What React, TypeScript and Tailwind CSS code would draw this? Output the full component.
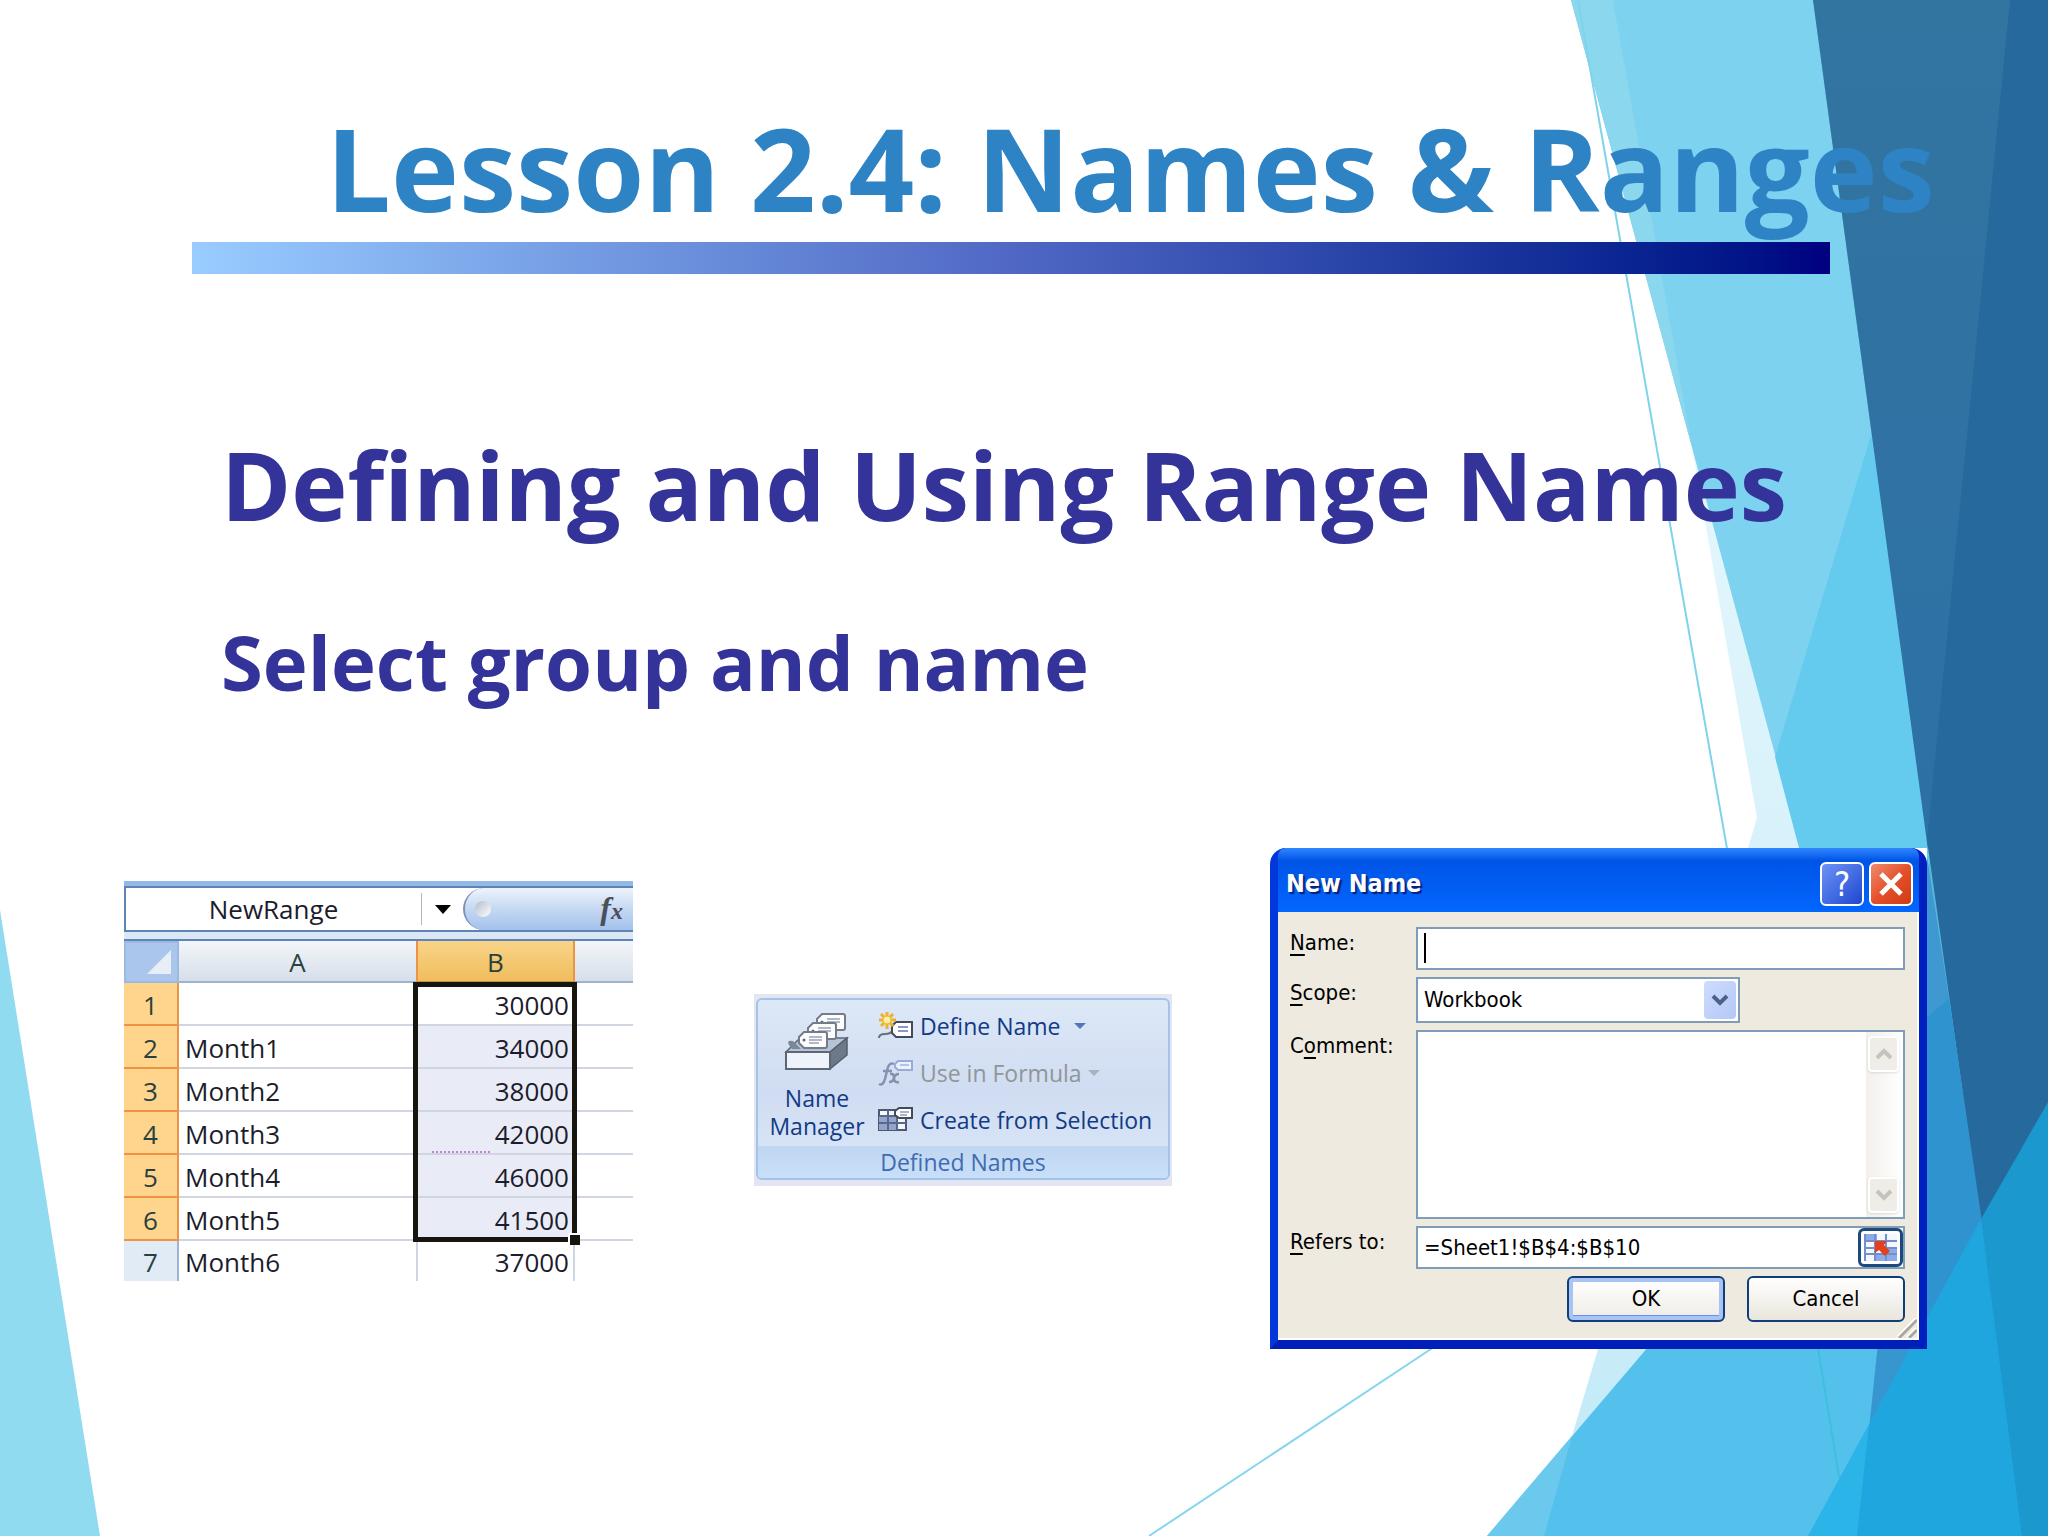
import { useState } from "react";

interface SheetRow {
  id: number;
  label: string;
  value: number;
}

const rows: SheetRow[] = [
  { id: 1, label: "", value: 30000 },
  { id: 2, label: "Month1", value: 34000 },
  { id: 3, label: "Month2", value: 38000 },
  { id: 4, label: "Month3", value: 42000 },
  { id: 5, label: "Month4", value: 46000 },
  { id: 6, label: "Month5", value: 41500 },
  { id: 7, label: "Month6", value: 37000 },
];

const Backdrop = () => (
  <svg
    className="absolute inset-0 h-full w-full"
    viewBox="0 0 2048 1536"
    preserveAspectRatio="none"
    aria-hidden="true"
  >
    <defs>
      <linearGradient id="pale" x1="0" y1="0" x2="0" y2="1">
        <stop offset="0" stopColor="#e4f6fc" />
        <stop offset="1" stopColor="#c5ebf8" />
      </linearGradient>
      <linearGradient id="steel" x1="0" y1="0" x2="0" y2="1">
        <stop offset="0" stopColor="#3275a1" />
        <stop offset="1" stopColor="#2d70a5" />
      </linearGradient>
    </defs>
    <polygon points="0,910 100,1536 0,1536" fill="#90dbf0" />
    <polygon points="1692,447 1757,818 1572,1436 1900,1100" fill="url(#pale)" />
    <polygon points="1580,5 1820,0 2048,0 2048,1536 1560,1536 1700,1320 1900,1100 1868,1080" fill="#55b8e0" />
    <polygon points="1571,0 1813,0 1928,850 1866,1091" fill="#7dd2f0" />
    <polygon points="1571,0 1613,0 1692,447" fill="#8ad7ee" />
    <polygon points="1873,428 1930,860 1866,1091 1799,848 1775,757" fill="#65cbee" />
    <polygon points="1813,0 2012,0 2012,400 1928,850" fill="url(#steel)" />
    <polygon points="2010,0 2048,0 2048,1110 1981,1222 1927,840" fill="#266a9d" />
    <polygon points="1926,850 1949,998 1926,1018 1900,1018" fill="#4098d0" />
    <polygon points="1900,1040 1949,998 1982,1222 1920,1335" fill="#2f93cf" />
    <polygon points="1487,1536 1660,1333 1879,1333 1869,1428 1808,1536" fill="#54c1ec" />
    <polygon points="1487,1536 1572,1436 1544,1536" fill="#6bc9ee" />
    <polygon points="1879,1333 1922,1331 1869,1430" fill="#3796d0" />
    <polygon points="1808,1536 1869,1424 1860,1536" fill="#2ab4e8" />
    <polygon points="1869,1424 1981,1219 2024,1536 1857,1536" fill="#20a6de" />
    <polygon points="1981,1219 2048,1102 2048,1536 2022,1536" fill="#1b98cd" />
    <line x1="1578" y1="0" x2="1729" y2="860" stroke="#7fd3ea" strokeWidth="2" />
    <line x1="1818" y1="1348" x2="1839" y2="1477" stroke="#3ebfe0" strokeWidth="2" />
    <line x1="1149" y1="1536" x2="1440" y2="1343" stroke="#84d5f0" strokeWidth="2" />
  </svg>
);

const Spreadsheet = () => {
  const [name, setName] = useState("NewRange");

  return (
    <section className="relative mt-[33px] w-[509px] flex-none overflow-hidden font-['Open_Sans',sans-serif] text-[26px] text-[#1c1c2c]">
      <div className="h-[5px] bg-[#93b9e6]" />
      <div className="flex h-[46px] items-center border-y-2 border-l-2 border-[#5d84b4] bg-white">
        <input
          aria-label="Name Box"
          value={name}
          onChange={(e) => setName(e.target.value)}
          className="h-8 w-[296px] border-r border-[#b4b4b8] text-center outline-none"
        />
        <button aria-label="Name list" className="flex w-[41px] justify-center">
          <svg width="16" height="9" viewBox="0 0 16 9">
            <path d="M0 0h16L8 9z" fill="#000" />
          </svg>
        </button>
        <div className="flex h-full flex-1 items-center justify-between rounded-l-full border-l-2 border-[#7c94b8] bg-linear-to-b from-[#eef4fc] via-[#c5d8f2] to-[#a3c1ec] pr-2.5 pl-2.5">
          <span className="h-4 w-4 rounded-full bg-linear-to-br from-[#b4bccb] to-white" />
          <button className="font-['Liberation_Serif',serif] text-[32px] leading-8 font-bold text-[#4a4f58] italic">
            f<span className="text-[24px]">x</span>
          </button>
        </div>
      </div>
      <div className="h-[9px] border-b-2 border-[#5d84b4] bg-[#dbe7f5]" />
      <table className="w-full table-fixed border-separate border-spacing-0 leading-8">
        <colgroup>
          <col className="w-[55px]" />
          <col className="w-[237px]" />
          <col className="w-[159px]" />
          <col />
        </colgroup>
        <thead>
          <tr className="h-[42px] bg-linear-to-b from-[#f3f6fa] to-[#d4dde9] text-[#27413f]">
            <th className="border-2 border-[#9cb9e2] bg-[#abc6ec]">
              <svg className="ml-auto mr-1.5" width="24" height="24" viewBox="0 0 24 24">
                <path d="M24 0v24H0z" fill="#e8eef6" />
              </svg>
            </th>
            <th className="border-b-2 border-[#9db3cf] pt-0.5 font-normal">A</th>
            <th className="border-x-2 border-b-2 border-[#ee9344] border-b-[#b89550] bg-linear-to-b from-[#f8d489] to-[#f0bd5b] pt-0.5 font-normal">
              B
            </th>
            <th className="border-b-2 border-[#9db3cf]" />
          </tr>
        </thead>
        <tbody>
          {rows.map((row) => (
            <tr key={row.id} className={row.id < 7 ? "h-[43px]" : "h-10"}>
              <th
                className={
                  row.id < 7
                    ? "border-r-2 border-b-2 border-[#ee9344] bg-[#ffd58d] pt-0.5 font-normal text-[#27413f]"
                    : "border-r-2 border-[#9db3cf] bg-[#e1ebf6] pt-0.5 font-normal text-[#27413f]"
                }
              >
                {row.id}
              </th>
              <td className={row.id < 7 ? "border-b-2 border-[#d0d5e2] pt-0.5 pl-1.5" : "pt-0.5 pl-1.5"}>
                {row.label}
              </td>
              <td
                className={
                  row.id === 1
                    ? "border-b-2 border-[#d0d5e2] bg-white pt-0.5 pr-1.5 text-right"
                    : row.id < 7
                      ? "border-b-2 border-[#d0d5e2] bg-[#e9ecf6] pt-0.5 pr-1.5 text-right"
                      : "border-x-2 border-[#d0d5e2] bg-white pt-0.5 pr-1 text-right"
                }
              >
                {row.value}
              </td>
              <td className={row.id < 7 ? "border-b-2 border-[#d0d5e2]" : ""} />
            </tr>
          ))}
        </tbody>
      </table>
      <div className="pointer-events-none absolute top-[101px] left-[289px] h-[260px] w-[164px] border-5 border-[#16160f]">
        <span className="absolute top-[164px] left-[14px] w-[58px] border-t-2 border-dotted border-[#c97fd0]" />
        <span className="absolute -right-2 -bottom-2 h-3 w-3 border-t-2 border-l-2 border-white bg-[#16160f]" />
      </div>
    </section>
  );
};

const Tag = ({ x, y }: { x: number; y: number }) => (
  <g transform={`translate(${x} ${y})`}>
    <path
      d="M5 0h21a2 2 0 0 1 2 2v12a2 2 0 0 1-2 2H5l-5-5V5z"
      fill="#fdfdfe"
      stroke="#747c8c"
      strokeWidth="2"
    />
    <circle cx="5" cy="8" r="1.5" fill="#5f6878" />
    <path d="M10 5h13M10 8h13M10 11h10" stroke="#98a3b8" strokeWidth="1.5" />
  </g>
);

const NameManagerIcon = () => (
  <svg width="66" height="62" viewBox="0 0 66 62" aria-hidden="true">
    <path d="M2 40 16 26h47L46 40z" fill="#b4c3d6" stroke="#5d6675" strokeWidth="1.5" />
    <path d="M46 40 63 26v17L46 57z" fill="#6d7888" stroke="#555e6d" strokeWidth="1.5" />
    <path d="M5 33q-3-5 4-4l8 8H8z" fill="#7c8797" />
    <Tag x={33} y={2} />
    <Tag x={24} y={11} />
    <Tag x={15} y={20} />
    <path d="M2 40h44v17H2z" fill="#eef2fb" stroke="#5d6675" strokeWidth="2" />
  </svg>
);

const DefineNameIcon = () => (
  <svg width="36" height="28" viewBox="0 0 36 28" aria-hidden="true">
    <path d="M1 26q0-4 6-4t8-4" fill="none" stroke="#68707e" strokeWidth="2" />
    <path d="M18 10h16v15H18l-4-4v-7z" fill="#fff" stroke="#444c5c" strokeWidth="2" />
    <path d="M20 15h10M20 19h10" stroke="#8a9ac0" strokeWidth="2" />
    <path d="M9 0v17M1 8h17M3 2l12 12M15 2 3 14" stroke="#eeb12c" strokeWidth="3" />
    <circle cx="9" cy="8" r="4" fill="#fff0a0" stroke="#f0b93a" />
  </svg>
);

const UseInFormulaIcon = () => (
  <svg width="36" height="28" viewBox="0 0 36 28" aria-hidden="true">
    <path d="M1 25q4 2 6-5l3-12q2-5 6-3M5 12h9" fill="none" stroke="#8790ac" strokeWidth="2.5" />
    <path d="M12 15q4-1 4 4t5 4M21 15q-4 0-5 4t-5 4" fill="none" stroke="#8790ac" strokeWidth="2.5" />
    <path d="M20 2h14v9H20l-3-3V5z" fill="#eaf1fc" stroke="#9aacd6" strokeWidth="2" />
    <path d="M22 6h9" stroke="#b4c2e2" strokeWidth="2" />
  </svg>
);

const CreateIcon = () => (
  <svg width="36" height="28" viewBox="0 0 36 28" aria-hidden="true">
    <path d="M1 4h27v20H1z" fill="#f4f7fc" stroke="#4f5872" strokeWidth="2" />
    <path d="M1 10h18v14H1z" fill="#94a5cc" />
    <path d="M1 10h27M1 17h27M10 4v20M19 4v20" stroke="#5a678e" strokeWidth="2" />
    <path d="M21 2h13v10H21l-4-3V5z" fill="#fff" stroke="#444c5c" strokeWidth="2" />
    <path d="M22 6h9M22 9h7" stroke="#8a9ac0" strokeWidth="1.5" />
  </svg>
);

const RibbonGroup = () => (
  <section className="mt-[146px] ml-[23px] w-[418px] flex-none bg-[#e2e6f3] px-0.5 pt-1 pb-1.5 font-['Open_Sans',sans-serif] text-[23px] text-[#123a85]">
    <div className="overflow-hidden rounded-md border-2 border-[#a3c4e8] bg-linear-to-b from-[#dde8f7] via-[#d0dcf1] to-[#dae8fa]">
      <div className="flex h-[146px] gap-2.5 pl-2">
        <button className="flex w-[102px] flex-col items-center pt-3 leading-7">
          <NameManagerIcon />
          <span className="mt-2.5">
            Name
            <br />
            Manager
          </span>
        </button>
        <div className="flex flex-col gap-[19px] pt-3">
          <button className="flex h-7 items-center gap-1.5">
            <DefineNameIcon />
            Define Name
            <svg className="ml-2" width="12" height="6" viewBox="0 0 12 6">
              <path d="M0 0h12L6 6z" fill="#5578b4" />
            </svg>
          </button>
          <button disabled className="flex h-7 items-center gap-1.5 text-[#8f9698]">
            <UseInFormulaIcon />
            Use in Formula
            <svg width="12" height="6" viewBox="0 0 12 6">
              <path d="M0 0h12L6 6z" fill="#a7b2bf" />
            </svg>
          </button>
          <button className="flex h-7 items-center gap-1.5 whitespace-nowrap">
            <CreateIcon />
            Create from Selection
          </button>
        </div>
      </div>
      <h4 className="bg-linear-to-b from-[#c0d6f0] to-[#c8dffa] text-center leading-8 text-[#3f6cb0]">
        Defined Names
      </h4>
    </div>
  </section>
);

const Chevron = ({ up = false, color }: { up?: boolean; color: string }) => (
  <svg width="18" height="12" viewBox="0 0 18 12" aria-hidden="true">
    <path d={up ? "M2 10 9 3l7 7" : "M2 2l7 7 7-7"} fill="none" stroke={color} strokeWidth="4" />
  </svg>
);

const NewNameDialog = () => {
  const [name, setName] = useState("");
  const [comment, setComment] = useState("");
  const [refersTo, setRefersTo] = useState("=Sheet1!$B$4:$B$10");

  return (
    <div className="w-[657px] flex-none bg-white">
      <section className="rounded-t-2xl border-x-8 border-b-9 border-[#0038dc] border-r-[#0021c0] border-b-[#001fb8] bg-[#0038dc] font-['DejaVu_Sans_Condensed','DejaVu_Sans',sans-serif] text-[22px] leading-7 text-black">
        <header className="flex h-16 items-center gap-[5px] rounded-t-lg bg-linear-to-b from-[#2f86ff] via-[#0054e6] via-20% to-[#0366ff] pt-2 pr-1.5 pl-2">
          <h4 className="flex-1 text-[25px] font-bold text-white [text-shadow:2px_2px_1px_#0a1f7c]">New Name</h4>
          <button
            type="button"
            aria-label="Help"
            className="h-11 w-11 rounded-md border-2 border-white bg-linear-to-br from-[#6f92f6] to-[#1f45cf] text-[34px] leading-10 text-white"
          >
            ?
          </button>
          <button
            type="button"
            aria-label="Close"
            className="flex h-11 w-11 items-center justify-center rounded-md border-2 border-white bg-linear-to-br from-[#ee8a6c] via-[#e4502a] to-[#cf3a10]"
          >
            <svg width="24" height="24" viewBox="0 0 24 24">
              <path d="M2 2l20 20M22 2 2 22" stroke="#fff" strokeWidth="5" />
            </svg>
          </button>
        </header>
        <form
          className="relative border-r-2 border-b-2 border-white bg-[#eeeadf] px-3 pt-[15px] pb-4"
          onSubmit={(e) => e.preventDefault()}
        >
          <div className="grid grid-cols-[126px_1fr] gap-y-[7px]">
            <label htmlFor="name" className="pt-0.5">
              <u className="underline-offset-4">N</u>ame:
            </label>
            <div className="relative">
              <input
                id="name"
                value={name}
                onChange={(e) => setName(e.target.value)}
                className="block h-[43px] w-full border-2 border-[#7f9db9] bg-white px-1.5 outline-none"
              />
              <span className="absolute top-1.5 left-2 h-[30px] w-0.5 bg-black" />
            </div>

            <label htmlFor="scope" className="pt-0.5">
              <u className="underline-offset-4">S</u>cope:
            </label>
            <div className="relative w-[324px]">
              <select
                id="scope"
                className="block h-[46px] w-full appearance-none border-2 border-[#7f9db9] bg-white px-1.5 outline-none"
              >
                <option>Workbook</option>
              </select>
              <span className="pointer-events-none absolute top-1 right-1 flex h-[38px] w-8 items-center justify-center rounded-sm bg-linear-to-br from-[#cfdcfd] to-[#b3c8f6]">
                <Chevron color="#4d6185" />
              </span>
            </div>

            <label htmlFor="comment" className="pt-0.5">
              C<u className="underline-offset-4">o</u>mment:
            </label>
            <div className="flex h-[189px] border-2 border-[#7f9db9] bg-white">
              <textarea
                id="comment"
                value={comment}
                onChange={(e) => setComment(e.target.value)}
                className="flex-1 resize-none px-1.5 outline-none"
              />
              <div className="mr-0.5 flex w-[35px] flex-col justify-between bg-linear-to-r from-[#f3f0ec] to-white py-1">
                <button
                  type="button"
                  aria-label="Scroll up"
                  className="mx-0.5 flex h-9 items-center justify-center rounded-sm border-2 border-white bg-[#efede8] shadow"
                >
                  <Chevron up color="#c6c3bd" />
                </button>
                <button
                  type="button"
                  aria-label="Scroll down"
                  className="mx-0.5 flex h-9 items-center justify-center rounded-sm border-2 border-white bg-[#efede8] shadow"
                >
                  <Chevron color="#c6c3bd" />
                </button>
              </div>
            </div>

            <label htmlFor="refers" className="pt-0.5">
              <u className="underline-offset-4">R</u>efers to:
            </label>
            <div className="flex h-[43px] border-2 border-[#7f9db9] bg-white">
              <input
                id="refers"
                value={refersTo}
                onChange={(e) => setRefersTo(e.target.value)}
                className="min-w-0 flex-1 px-1.5 outline-none"
              />
              <button
                type="button"
                aria-label="Collapse dialog"
                className="flex w-[45px] items-center justify-center rounded-md border-3 border-[#1c4a7c] bg-white"
              >
                <svg width="33" height="27" viewBox="0 0 33 27">
                  <path d="M0 0h33v27H0z" fill="#f4f7fd" />
                  <path d="M0 0h13v7H0zM22 14h11v13H22zM11 20h11v7H11z" fill="#8fabe6" />
                  <path d="M0 7h33M0 14h33M0 20h33M1 0v27M11 0v27M22 0v27" stroke="#6f8fd0" strokeWidth="2" />
                  <path d="M11 7h12l-3 4 6 6-5 5-6-6-4 3z" fill="#e3401c" />
                </svg>
              </button>
            </div>
          </div>
          <div className="mt-[7px] flex justify-end gap-[22px]">
            <button
              type="submit"
              className="h-[46px] w-[158px] rounded-md border-2 border-[#0f3f78] bg-linear-to-b from-white to-[#eeece6] shadow-[inset_0_0_0_4px_#a9c3f5,inset_0_-5px_0_0_#6d8fe8]"
            >
              OK
            </button>
            <button
              type="button"
              className="h-[46px] w-[158px] rounded-md border-2 border-[#0f3f78] bg-linear-to-b from-white to-[#e9e6dd]"
            >
              Cancel
            </button>
          </div>
          <svg className="absolute right-0 bottom-0" width="20" height="20" viewBox="0 0 20 20" aria-hidden="true">
            <path d="M1 20 20 1M11 20l9-9" stroke="#fff" strokeWidth="5" />
            <path d="M2 20 20 2M12 20l8-8" stroke="#aaa79c" strokeWidth="3" />
          </svg>
        </form>
      </section>
    </div>
  );
};

const App = () => {
  return (
    <main className="relative min-h-screen overflow-hidden bg-white">
      <Backdrop />
      <div className="relative pt-27">
        <header>
          <h1 className="pl-[326px] font-['Open_Sans',sans-serif] text-[115px] leading-[120px] font-bold whitespace-nowrap text-[#2e83c5]">
            Lesson 2.4: Names &amp; Ranges
          </h1>
          <div className="mt-3.5 ml-48 h-8 w-4/5 bg-linear-to-r from-[#99ccff] via-[#5068c4] to-[#000080]" />
        </header>
        <div className="pl-[221px] font-['Open_Sans',sans-serif] font-bold whitespace-nowrap text-[#333399]">
          <h2 className="mt-40 text-[95px] leading-[100px]">Defining and Using Range Names</h2>
          <h3 className="mt-[88px] text-[76px] leading-[80px]">Select group and name</h3>
        </div>
        <div className="mt-[146px] flex items-start gap-[98px] pl-31">
          <Spreadsheet />
          <RibbonGroup />
          <NewNameDialog />
        </div>
      </div>
    </main>
  );
};

export default App;
